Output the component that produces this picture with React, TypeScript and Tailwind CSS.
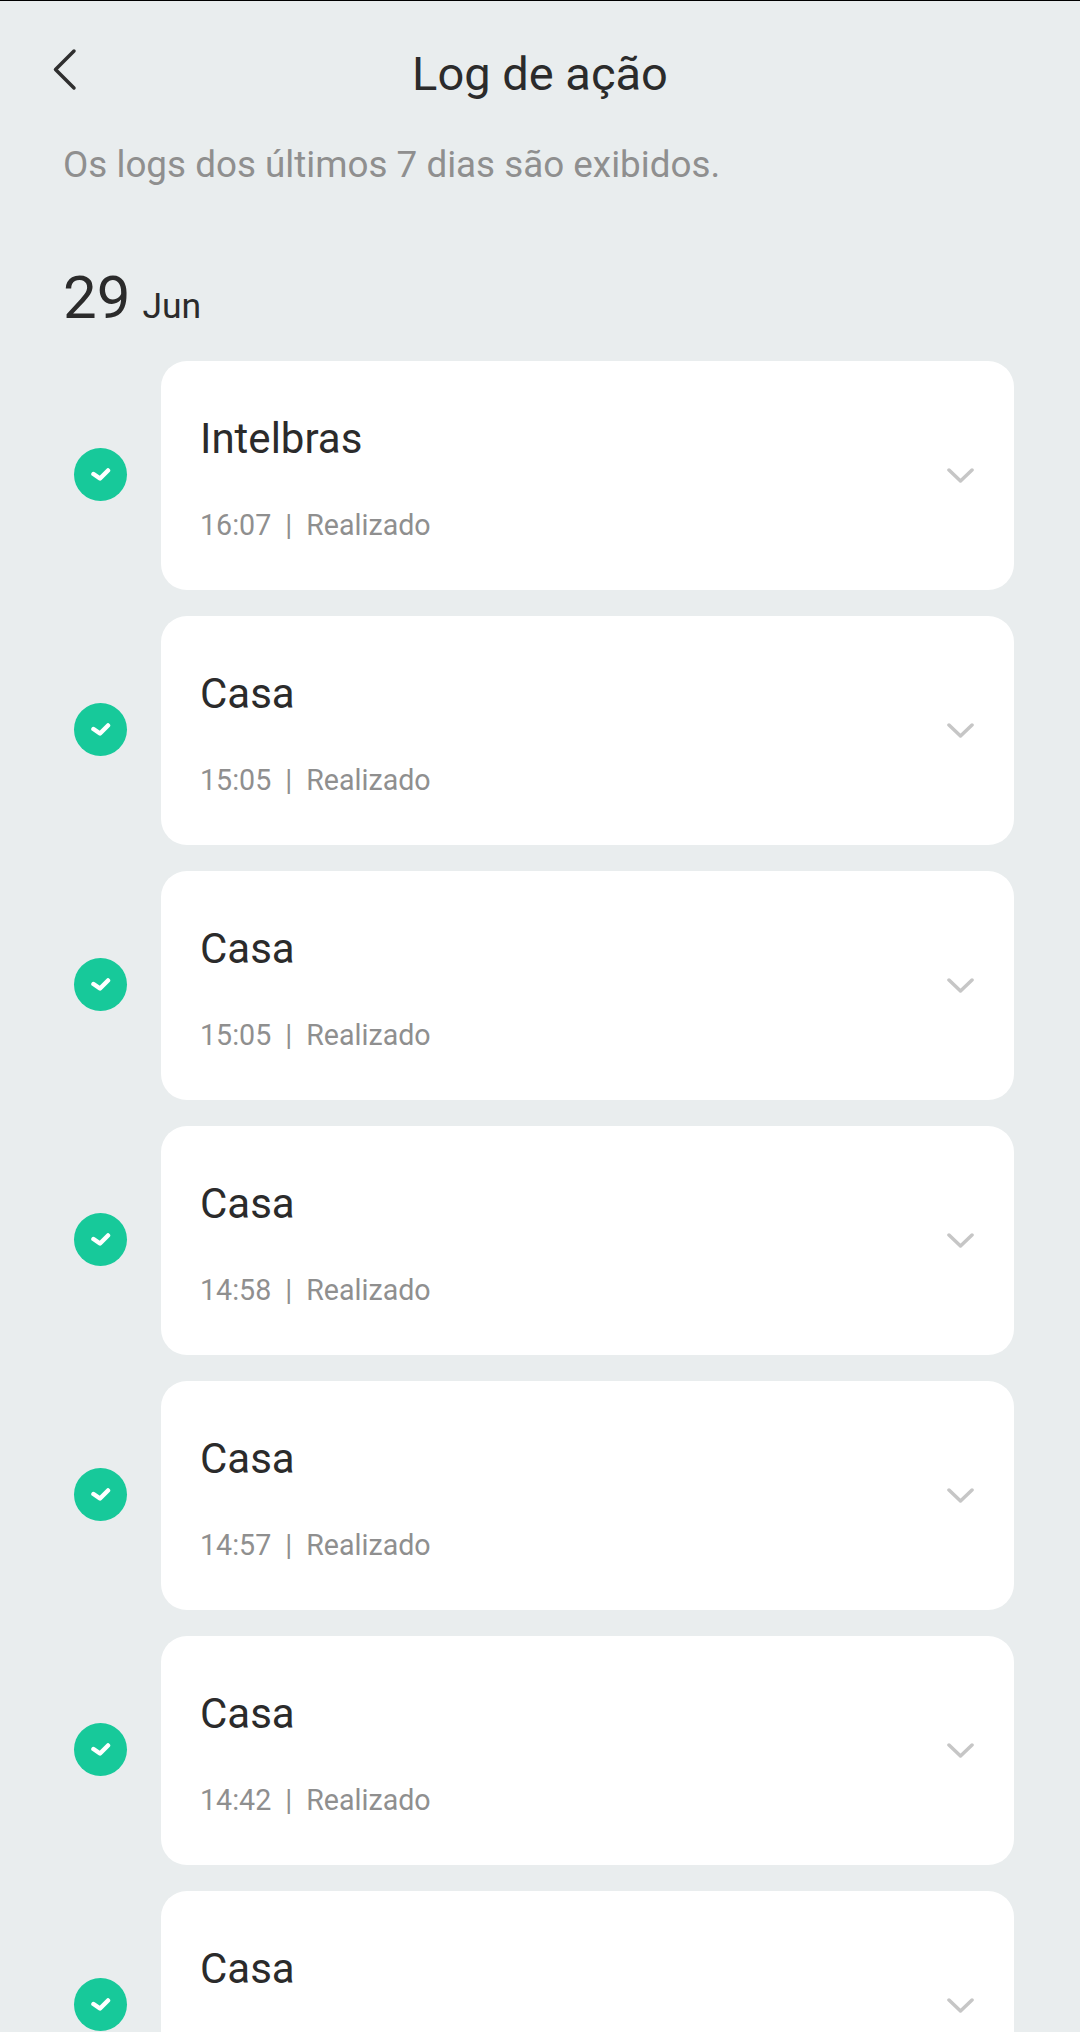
const logs: { name: string; time?: string }[] = [
    { name: 'Intelbras', time: '16:07' },
    { name: 'Casa', time: '15:05' },
    { name: 'Casa', time: '15:05' },
    { name: 'Casa', time: '14:58' },
    { name: 'Casa', time: '14:57' },
    { name: 'Casa', time: '14:42' },
    // last row runs past the bottom of the screen, its time is not visible
    { name: 'Casa' },
];

function LogRow({ name, time }: { name: string; time?: string }) {
    return (
        <div className="flex items-center">
            <div className="w-[53px] h-[53px] ml-[10px] mr-[34px] mb-[2px] shrink-0 rounded-full bg-[#17c99a] flex items-center justify-center">
                <svg width="21" height="17" viewBox="0 0 21 17" fill="none">
                    <path d="M3.5 8 10 12.5 18 4.5" stroke="#ffffff" strokeWidth="4.5" strokeLinecap="round" strokeLinejoin="round" />
                </svg>
            </div>
            <div className="relative flex-1 h-[229px] rounded-[26px] bg-white pl-[39px]">
                <div className="pt-[53px] text-[42px] leading-[50px] text-[#2b2b2b]">{name}</div>
                {time && (
                    <div className="mt-[43px] flex items-center text-[28.6px] leading-[36px] text-[#8f8f8f]">
                        <span>{time}</span>
                        <span className="mx-[14px]">|</span>
                        <span>Realizado</span>
                    </div>
                )}
                <svg width="28" height="18" viewBox="0 0 28 18" fill="none" className="absolute right-[39px] top-[106px]">
                    <path d="M2 3 13.5 14 25 3" stroke="#c6c6c6" strokeWidth="3.5" strokeLinecap="round" strokeLinejoin="round" />
                </svg>
            </div>
        </div>
    );
}

export default function App() {
    return (
        <div className="w-[1080px] h-[2032px] overflow-hidden bg-[#e9edee] border-t border-black" style={{ fontFamily: 'Roboto, sans-serif' }}>
            <header className="relative h-[143px]">
                <svg width="26" height="44" viewBox="0 0 26 44" fill="none" className="absolute left-[52px] top-[47px]">
                    <path d="M22 3 3.5 21.5 22 40" stroke="#2f2f2f" strokeWidth="3.5" strokeLinecap="round" strokeLinejoin="round" />
                </svg>
                <h1 className="pt-[45px] text-center text-[47px] leading-[56px] text-[#2b2b2b]">Log de ação</h1>
            </header>
            <p className="pl-[63px] text-[36.8px] leading-[42px] text-[#8f8f8f]">Os logs dos últimos 7 dias são exibidos.</p>
            <div className="pl-[63px] mt-[76px] flex items-baseline text-[#2b2b2b]">
                <span className="text-[60px] leading-[72px]">29</span>
                <span className="ml-[12px] text-[35.5px]">Jun</span>
            </div>
            <div className="mt-[27px] ml-[64px] mr-[66px] flex flex-col gap-[26px]">
                {logs.map((log, i) => (
                    <LogRow key={i} name={log.name} time={log.time} />
                ))}
            </div>
        </div>
    );
}
